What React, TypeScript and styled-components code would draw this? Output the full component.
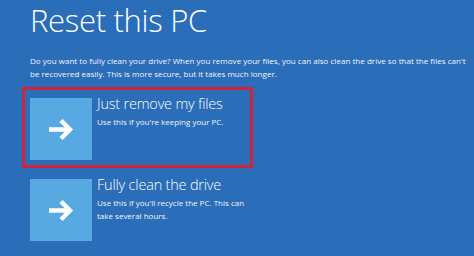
import React from 'react';
import styled, { createGlobalStyle } from 'styled-components';

const GlobalStyle = createGlobalStyle`
	html, body {
		margin: 0;
		padding: 0;
		background: #2a6db9;
	}
	body {
		font-family: 'Open Sans', 'Noto Sans', 'Liberation Sans', sans-serif;
		color: #ffffff;
	}
`;

interface OptionProps {
	title: string;
	text: string;
	highlighted?: boolean;
}

const ArrowIcon = () => (
	<svg width="26" height="23" viewBox="0 0 26 23" fill="none">
		<path d="M1 11.5H22" stroke="#ffffff" strokeWidth="4.5" />
		<path
			d="M13 2.5L22 11.5L13 20.5"
			stroke="#ffffff"
			strokeWidth="4.5"
			strokeLinejoin="miter"
		/>
	</svg>
);

const Option = ({ title, text, highlighted }: OptionProps) => {
	return (
		<OptionBox highlighted={highlighted}>
			<Tile>
				<ArrowIcon />
			</Tile>
			<OptionText>
				<OptionTitle>{title}</OptionTitle>
				<OptionSub>{text}</OptionSub>
			</OptionText>
		</OptionBox>
	);
};

const App = () => {
	return (
		<Page>
			<GlobalStyle />
			<Title>Reset this PC</Title>
			<Description>
				Do you want to fully clean your drive? When you remove your files,
				you can also clean the drive so that the files can't be recovered
				easily. This is more secure, but it takes much longer.
			</Description>
			<OptionList>
				<Option
					highlighted
					title="Just remove my files"
					text="Use this if you're keeping your PC."
				/>
				<Option
					title="Fully clean the drive"
					text="Use this if you'll recycle the PC. This can take several hours."
				/>
			</OptionList>
		</Page>
	);
};

const Page = styled('div')({
	width: '474px',
	height: '256px',
	boxSizing: 'border-box',
	padding: '0 0 0 30px',
	background: '#2a6db9',
	overflow: 'hidden',
});

const Title = styled('h1')({
	margin: '0',
	paddingTop: '2px',
	fontSize: '31px',
	lineHeight: '36px',
	fontWeight: 300,
	letterSpacing: '-0.3px',
	color: '#ffffff',
});

const Description = styled('p')({
	margin: '16px 0 0 0',
	width: '438px',
	fontSize: '8px',
	lineHeight: '13px',
	letterSpacing: '0.03px',
	color: '#f2f6fb',
});

const OptionList = styled('div')({
	display: 'flex',
	flexDirection: 'column',
	marginTop: '7px',
	marginLeft: '-8px',
});

const OptionBox = styled.div<{ highlighted?: boolean }>`
	display: flex;
	align-items: flex-start;
	gap: 5px;
	width: 231px;
	box-sizing: border-box;
	padding: 8px 5px 5px 5px;
	border: 3px solid ${(props) => (props.highlighted ? '#d3233a' : 'transparent')};
`;

const Tile = styled('div')({
	flex: '0 0 62px',
	width: '62px',
	height: '62px',
	background: '#57a9e2',
	display: 'flex',
	alignItems: 'center',
	justifyContent: 'center',
});

const OptionText = styled('div')({
	display: 'flex',
	flexDirection: 'column',
	minWidth: 0,
});

const OptionTitle = styled('div')({
	fontSize: '14.5px',
	lineHeight: '16px',
	fontWeight: 300,
	marginTop: '-2px',
	whiteSpace: 'nowrap',
	letterSpacing: '-0.2px',
});

const OptionSub = styled('div')({
	marginTop: '3px',
	marginRight: '-6px',
	fontSize: '8px',
	lineHeight: '13px',
	color: '#f2f6fb',
});

export default App;
